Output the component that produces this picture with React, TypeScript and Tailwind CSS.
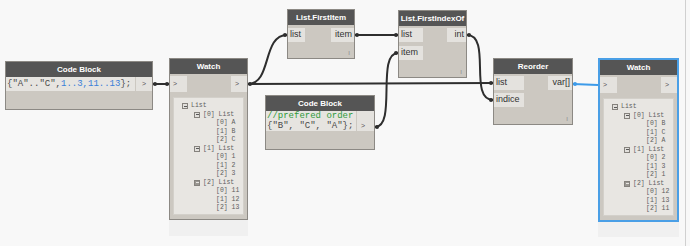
import type { ReactNode } from "react";

const sans = "font-['Liberation_Sans',Arial,sans-serif]";
const mono = "font-['Liberation_Mono','DejaVu_Sans_Mono',monospace]";

type Row = { d: number; t: string; toggle?: boolean; dark?: boolean };

function listRows(items: string[][]): Row[] {
  const rows: Row[] = [{ d: 0, t: "List", toggle: true }];
  items.forEach((group, i) => {
    rows.push({ d: 1, t: `[${i}] List`, toggle: true, dark: i === 2 });
    group.forEach((v, j) => rows.push({ d: 2, t: `[${j}] ${v}` }));
  });
  return rows;
}

const WATCH_IN = listRows([["A", "B", "C"], ["1", "2", "3"], ["11", "12", "13"]]);
const WATCH_OUT = listRows([["B", "C", "A"], ["2", "3", "1"], ["12", "13", "11"]]);

function Node({ className, title, selected, children }: { className: string; title: string; selected?: boolean; children: ReactNode }) {
  return (
    <div
      className={`absolute flex flex-col bg-[#ccc8c1] ${sans} ${selected ? "border-2 border-[#4a9fe6]" : "border border-[#8c8984]"} ${className}`}
    >
      <div className="flex h-[15px] shrink-0 items-center justify-center bg-[#555555] text-[8px] font-bold text-white">{title}</div>
      {children}
    </div>
  );
}

function Port({ label, className }: { label: string; className: string }) {
  return <div className={`flex h-[14px] items-center bg-[#e4e2de] px-[2px] text-[9px] text-[#333333] ${className}`}>{label}</div>;
}

function FnNode({
  className,
  title,
  inputs,
  outputs,
  inW,
  outW,
  top,
  gap,
}: {
  className: string;
  title: string;
  inputs: string[];
  outputs: string[];
  inW: string;
  outW: string;
  top: string;
  gap: string;
}) {
  return (
    <Node className={className} title={title}>
      <div className={`flex justify-between ${top}`}>
        <div className={`flex flex-col ${gap}`}>
          {inputs.map((l) => (
            <Port key={l} label={l} className={inW} />
          ))}
        </div>
        <div className="flex flex-col">
          {outputs.map((l) => (
            <Port key={l} label={l} className={`justify-end ${outW}`} />
          ))}
        </div>
      </div>
      <div className="mt-auto flex justify-end pr-[4px] pb-[1px] text-[6px] leading-[8px] text-[#8a8a8a]">I</div>
    </Node>
  );
}

function Toggle({ dark }: { dark?: boolean }) {
  return (
    <span
      className={`mr-[3px] flex h-[6px] w-[6px] shrink-0 items-center justify-center border border-[#85827d] ${dark ? "bg-[#9a9792]" : "bg-[#e2e0dc]"}`}
    >
      <span className={`h-px w-[3px] ${dark ? "bg-[#e8e6e2]" : "bg-[#5a5a5a]"}`} />
    </span>
  );
}

function TreeRow({ row }: { row: Row }) {
  if (row.toggle) {
    return (
      <div className={`flex h-[8.5px] items-center ${row.d === 0 ? "pl-[8px]" : "pl-[20px]"}`}>
        <Toggle dark={row.dark} />
        <span>{row.t}</span>
      </div>
    );
  }
  return <div className="flex h-[8.5px] items-center pl-[42px]">{row.t}</div>;
}

function WatchNode({ className, rows, selected }: { className: string; rows: Row[]; selected?: boolean }) {
  return (
    <Node className={className} title="Watch" selected={selected}>
      <div className="mt-[2px] flex h-4 shrink-0 justify-between text-[7px] text-[#555555]">
        <div className="flex w-[17px] items-center bg-[#e4e2de] pl-[3px]">&gt;</div>
        <div className="flex w-4 items-center bg-[#e4e2de] pl-[4px]">&gt;</div>
      </div>
      <div className={`mx-[3px] mt-[5px] mb-[4px] flex-1 border border-[#d3d0ca] bg-[#e8e6e2] pt-1 text-[6.5px] text-[#5e5e5e] ${mono}`}>
        {rows.map((r, i) => (
          <TreeRow key={i} row={r} />
        ))}
      </div>
    </Node>
  );
}

const WIRES = [
  "M153,84 L169,84",
  "M248,84 C272,84 262,35 287,35",
  "M248,84 L493,83",
  "M355,35 L398,35",
  "M375,127 C397,127 376,53 398,53",
  "M467,35 C492,35 468,100 493,100",
];

const ENDS: [number, number][] = [
  [155, 84], [167, 84], [250, 84], [285, 35], [491, 83], [357, 35], [396, 35], [377, 127], [396, 53], [469, 35], [491, 100],
];

export default function App() {
  return (
    <div className="relative h-[246px] w-[690px] overflow-hidden bg-[#f8f8f8]">
      <svg className="absolute inset-0" width="690" height="246" viewBox="0 0 690 246">
        {WIRES.map((d) => (
          <path key={d} d={d} fill="none" stroke="#2e2e2e" strokeWidth="2" />
        ))}
        <path d="M573,84 L598,85" fill="none" stroke="#3d9be9" strokeWidth="2" />
        {ENDS.map(([x, y]) => (
          <circle key={`${x}-${y}`} cx={x} cy={y} r="2" fill="#2e2e2e" />
        ))}
        <circle cx="575" cy="84" r="2" fill="#3d9be9" />
      </svg>

      <div className="absolute left-[169px] top-[220px] h-[16px] w-[79px] bg-[#f0f0f0]" />
      <div className="absolute left-[598px] top-[221px] h-[16px] w-[81px] bg-[#f0f0f0]" />
      <div className="absolute right-[4px] top-0 h-full w-px bg-[#d0d0d0]" />

      <Node className="left-[5px] top-[61px] h-[49px] w-[148px]" title="Code Block">
        <div className="flex gap-px">
          <div className={`flex-1 bg-[#e6e4e0] pl-[1px] text-[9px] leading-[14px] text-[#4a4a4a] ${mono}`}>
            {'{"A".."C",'}
            <span className="text-[#3b7fd8]">1..3,11..13</span>
            {"};"}
          </div>
          <div className="flex w-4 items-center justify-center bg-[#e4e2de] text-[7px] text-[#555555]">&gt;</div>
        </div>
      </Node>

      <WatchNode className="left-[169px] top-[58px] h-[162px] w-[79px]" rows={WATCH_IN} />

      <FnNode
        className="left-[287px] top-[9px] h-[50px] w-[68px]"
        title="List.FirstItem"
        inputs={["list"]}
        outputs={["item"]}
        inW="w-[17px]"
        outW="w-[23px]"
        top="mt-[3px]"
        gap="gap-1"
      />

      <FnNode
        className="left-[398px] top-[10px] h-[68px] w-[69px]"
        title="List.FirstIndexOf"
        inputs={["list", "item"]}
        outputs={["int"]}
        inW="w-[24px]"
        outW="w-[19px]"
        top="mt-[2px]"
        gap="gap-1"
      />

      <Node className="left-[265px] top-[95px] h-[55px] w-[110px]" title="Code Block">
        <div className="flex gap-px">
          <div className={`flex-1 bg-[#e6e4e0] pl-[1px] text-[9px] leading-[10px] text-[#4a4a4a] ${mono}`}>
            <div className="text-[#2f9a3a]">//prefered order</div>
            <div>{'{"B", "C", "A"};'}</div>
          </div>
          <div className="flex w-[17px] items-end bg-[#e4e2de] pl-[4px] text-[7px] leading-[10px] text-[#555555]">&gt;</div>
        </div>
      </Node>

      <FnNode
        className="left-[493px] top-[58px] h-[67px] w-[80px]"
        title="Reorder"
        inputs={["list", "indice"]}
        outputs={["var[]"]}
        inW="w-[30px]"
        outW="w-[24px]"
        top="mt-[2px]"
        gap="gap-[3px]"
      />

      <WatchNode className="left-[598px] top-[58px] h-[164px] w-[81px]" rows={WATCH_OUT} selected />
    </div>
  );
}
